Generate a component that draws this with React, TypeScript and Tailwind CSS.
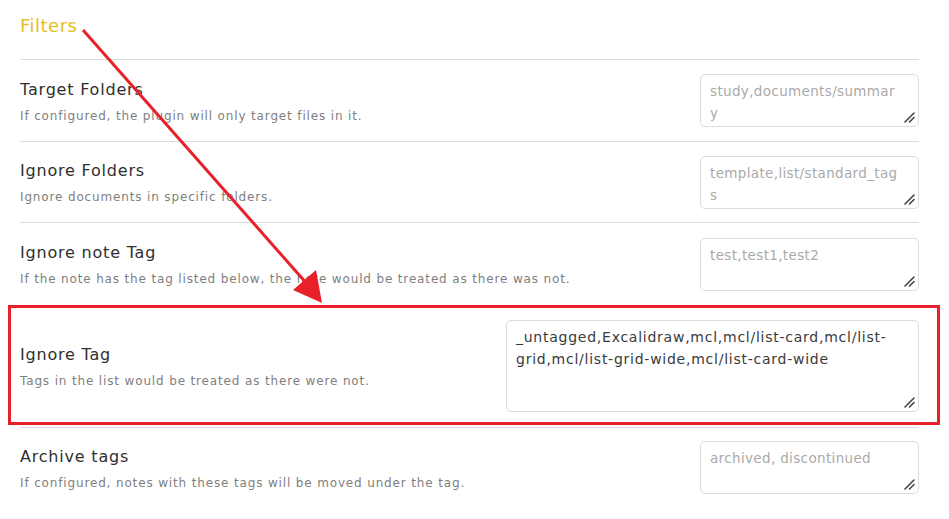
const font = { fontFamily: '"DejaVu Sans", "Noto Sans", sans-serif' };

interface SettingRowType {
  name: string;
  desc: string;
  lines: string[];
  placeholder?: boolean;
  wide?: boolean;
}

const ResizeHandle = () => (
  <svg
    className="absolute right-[3px] bottom-[3px]"
    width="12"
    height="12"
    viewBox="0 0 12 12"
  >
    <path d="M11 2 L2 11" stroke="#444" strokeWidth="1.6" strokeLinecap="round" />
    <path d="M11 6.5 L6.5 11" stroke="#444" strokeWidth="1.6" strokeLinecap="round" />
  </svg>
);

const TextBox = ({ lines, placeholder, wide }: Omit<SettingRowType, "name" | "desc">) => {
  return (
    <div
      className={`relative shrink-0 rounded-[5px] border border-[#dcdcdc] bg-white px-[9px] pt-[5px] leading-[22px] ${
        wide ? "w-[413px] h-[92px]" : "w-[219px] h-[53px]"
      } ${
        placeholder
          ? "text-[#aaaaaa] text-[13.5px] tracking-[0.35px]"
          : "text-[#3a3a3a] text-[14px] tracking-[0.75px]"
      }`}
    >
      {lines.map((l, i) => (
        <div key={i} className="whitespace-nowrap">
          {l}
        </div>
      ))}
      <ResizeHandle />
    </div>
  );
};

const RowContent = ({ name, desc, lines, placeholder, wide }: SettingRowType) => (
  <div className="flex items-center justify-between gap-4 h-full">
    <div className="flex flex-col pt-[2px]">
      <div className="text-[16px] leading-[20px] tracking-[0.8px] text-[#2f2f2f]">{name}</div>
      <div className="text-[12px] leading-[16px] tracking-[0.85px] mt-[8px] text-[#808080]">
        {desc}
      </div>
    </div>
    <TextBox lines={lines} placeholder={placeholder} wide={wide} />
  </div>
);

const App = () => {
  return (
    <div className="relative w-[949px] h-[519px] bg-white overflow-hidden" style={font}>
      <div className="pl-5 w-[919px]">
        <div className="h-[59px] pt-[14px] text-[18px] leading-[24px] tracking-[0.5px] text-[#e6be1e]">
          Filters
        </div>

        <div className="h-[82px] border-t border-[#dddddd]">
          <RowContent
            name="Target Folders"
            desc="If configured, the plugin will only target files in it."
            lines={["study,documents/summar", "y"]}
            placeholder
          />
        </div>
        <div className="h-[81px] border-t border-[#dddddd]">
          <RowContent
            name="Ignore Folders"
            desc="Ignore documents in specific folders."
            lines={["template,list/standard_tag", "s"]}
            placeholder
          />
        </div>
        <div className="h-[83px] border-t border-[#dddddd]">
          <RowContent
            name="Ignore note Tag"
            desc="If the note has the tag listed below, the note would be treated as there was not."
            lines={["test,test1,test2"]}
            placeholder
          />
        </div>

        <div className="h-[120px] ml-[-12px] mr-[-21px] pl-[9px] pr-[18px] border-[3px] border-[#e8202a] pt-[1px]">
          <RowContent
            name="Ignore Tag"
            desc="Tags in the list would be treated as there were not."
            lines={["_untagged,Excalidraw,mcl,mcl/list-card,mcl/list-", "grid,mcl/list-grid-wide,mcl/list-card-wide"]}
            wide
          />
        </div>

        <div className="h-[80px] mt-[2px] border-t border-[#dddddd]">
          <RowContent
            name="Archive tags"
            desc="If configured, notes with these tags will be moved under the tag."
            lines={["archived, discontinued"]}
            placeholder
          />
        </div>
      </div>

      <svg
        className="absolute left-0 top-0 pointer-events-none"
        width="949"
        height="519"
        viewBox="0 0 949 519"
      >
        <line x1="83" y1="30" x2="308" y2="285" stroke="#e8202a" strokeWidth="3" />
        <polygon points="322,303 293,290 316,270" fill="#e8202a" />
      </svg>
    </div>
  );
};

export default App;
